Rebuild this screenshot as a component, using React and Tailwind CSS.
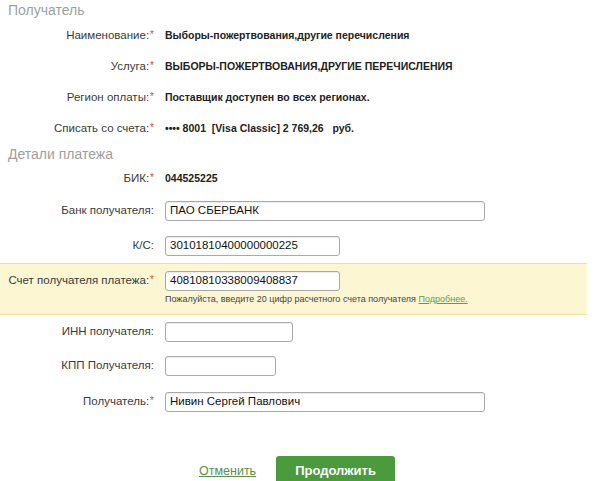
const Star = () => <span className="text-[#c84a3f] text-[10px] align-top ml-px">*</span>;

function Label({ children, star }) {
  return (
    <div className="w-[154px] shrink-0 text-right text-[11.5px] text-[#3a3a3a]">
      {children}
      {star && <Star />}
    </div>
  );
}

function Input({ value, w }) {
  return (
    <div
      className={`${w} h-[20px] border border-[#a9a9a9] rounded-[3px] bg-white px-[4px] flex items-center text-[11.5px] text-[#111] shadow-[inset_0_1px_1px_rgba(0,0,0,0.08)]`}
    >
      {value}
    </div>
  );
}

function Row({ label, star, h, children }) {
  return (
    <div className={`flex items-center gap-[11px] ${h}`}>
      <Label star={star}>{label}</Label>
      {children}
    </div>
  );
}

const Value = ({ children }) => <div className="text-[10.5px] font-bold text-[#222] whitespace-pre">{children}</div>;

export default function App() {
  return (
    <div className="w-[600px] h-[481px] overflow-hidden bg-white font-[family-name:Liberation_Sans,Arial,sans-serif]">
      <div className="h-[20px] flex items-center pl-[8px] text-[14px] text-[#a0a0a0]">Получатель</div>
      <Row label="Наименование:" star h="h-[31px]">
        <Value>Выборы-пожертвования,другие перечисления</Value>
      </Row>
      <Row label="Услуга:" star h="h-[31px]">
        <Value>ВЫБОРЫ-ПОЖЕРТВОВАНИЯ,ДРУГИЕ ПЕРЕЧИСЛЕНИЯ</Value>
      </Row>
      <Row label="Регион оплаты:" star h="h-[31px]">
        <Value>Поставщик доступен во всех регионах.</Value>
      </Row>
      <Row label="Списать со счета:" star h="h-[31px]">
        <Value>{"•••• 8001  [Visa Classic] 2 769,26   руб."}</Value>
      </Row>
      <div className="h-[20px] flex items-center pl-[8px] text-[14px] text-[#a0a0a0]">Детали платежа</div>
      <Row label="БИК:" star h="h-[30px]">
        <Value>044525225</Value>
      </Row>
      <Row label="Банк получателя:" h="h-[34px]">
        <Input value="ПАО СБЕРБАНК" w="w-[320px]" />
      </Row>
      <Row label="К/С:" h="h-[35px]">
        <Input value="30101810400000000225" w="w-[175px]" />
      </Row>

      <div className="w-[587px] bg-[#fcf6d3] border-y border-[#efe09a] pt-[7px] pb-[8px]">
        <div className="flex items-center gap-[11px] h-[20px]">
          <Label star>Счет получателя платежа:</Label>
          <Input value="40810810338009408837" w="w-[175px]" />
        </div>
        <div className="pl-[165px] mt-[3px] h-[12px] flex items-center text-[9px] text-[#444]">
          Пожалуйста, введите 20 цифр расчетного счета получателя&nbsp;
          <span className="text-[#5f9e4c] underline">Подробнее.</span>
        </div>
      </div>

      <Row label="ИНН получателя:" h="h-[33px]">
        <Input value="" w="w-[128px]" />
      </Row>
      <Row label="КПП Получателя:" h="h-[36px]">
        <Input value="" w="w-[111px]" />
      </Row>
      <Row label="Получатель:" star h="h-[36px]">
        <Input value="Нивин Сергей Павлович" w="w-[320px]" />
      </Row>

      <div className="flex items-center mt-[36px]">
        <div className="w-[199px]" />
        <a className="text-[12.5px] text-[#5a8f4d] underline w-[77px]">Отменить</a>
        <button className="w-[119px] h-[30px] rounded-[3px] bg-[#4b9a3d] text-white text-[13px] font-bold">
          Продолжить
        </button>
      </div>
    </div>
  );
}
